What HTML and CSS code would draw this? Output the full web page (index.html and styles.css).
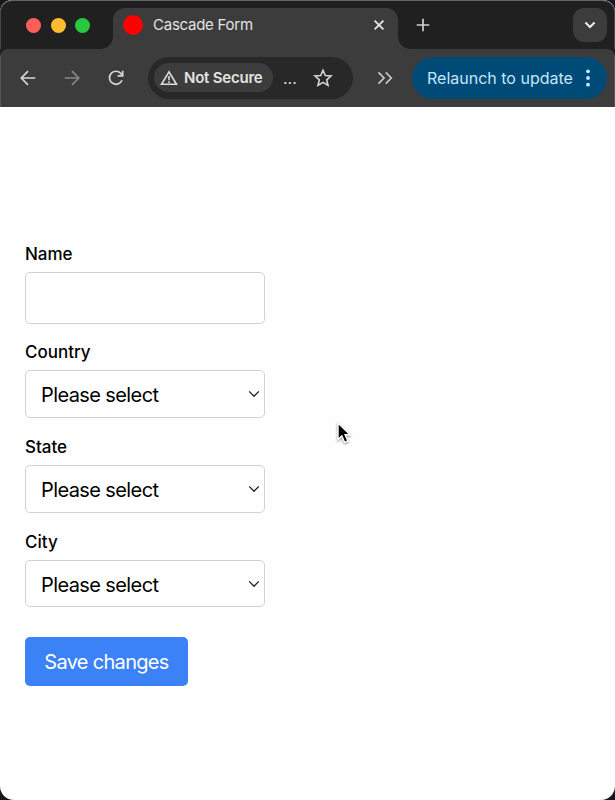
FILE: index.html
```html
<!DOCTYPE html>
<html lang="en">
<head>
<meta charset="utf-8">
<title>Cascade Form</title>
<link rel="stylesheet" href="styles.css">
</head>
<body>
<div class="window">
  <header class="tabstrip">
    <div class="lights"><span class="light close"></span><span class="light minimize"></span><span class="light zoom"></span></div>
    <div class="tab">
      <span class="favicon"></span>
      <span class="tab-title">Cascade Form</span>
      <svg class="tab-close" viewBox="0 0 12 12"><path d="M1.6 1.6l8.8 8.8M10.4 1.6l-8.8 8.8"/></svg>
    </div>
    <svg class="new-tab" viewBox="0 0 14 14"><path d="M7 .7v12.6M.7 7h12.6"/></svg>
    <div class="tab-search"><svg viewBox="0 0 12 8"><path d="M1.4 1.5L6 6l4.6-4.5"/></svg></div>
  </header>
  <nav class="toolbar">
    <svg class="nav-icon" viewBox="0 0 16 16"><path d="M15.3 8H1.6M8 1.2L1.3 8 8 14.8"/></svg>
    <svg class="nav-icon forward" viewBox="0 0 16 16"><path d="M.7 8h13.7M8 1.2L14.7 8 8 14.8"/></svg>
    <svg class="nav-icon" viewBox="0 0 16 16"><path d="M14 10.2A6.5 6.5 0 1 1 12.8 3.4L14.6 5.3M14.7.8v5.1H9.6"/></svg>
    <div class="address">
      <div class="security">
        <svg viewBox="0 0 18 16"><path d="M9 1.8L1.5 14.3h15zM9 6v4.2M9 11.3v1.6"/></svg>
        <span>Not Secure</span>
      </div>
      <span class="url">...</span>
      <svg class="star" viewBox="0 0 20 20"><path d="M10 2.3l2.3 5.2 5.7.5-4.3 3.8 1.3 5.6-5-3-5 3 1.3-5.6L2 8l5.7-.5z"/></svg>
    </div>
    <svg class="more" viewBox="0 0 16 14"><path d="M1.5 1.4L7 7l-5.5 5.6M8.8 1.4L14.3 7l-5.5 5.6"/></svg>
    <div class="relaunch"><span>Relaunch to update</span><svg viewBox="0 0 4 18"><circle cx="2" cy="2.3" r="1.9"/><circle cx="2" cy="9" r="1.9"/><circle cx="2" cy="15.7" r="1.9"/></svg></div>
  </nav>
  <main class="page">
    <form class="form">
      <label for="name">Name</label>
      <input class="control name" id="name" type="text">
      <label for="country">Country</label>
      <div class="select"><select class="control" id="country"><option>Please select</option></select><svg viewBox="0 0 12 8"><path d="M1.2 1.4L6 6.3l4.8-4.9"/></svg></div>
      <label for="state">State</label>
      <div class="select"><select class="control" id="state"><option>Please select</option></select><svg viewBox="0 0 12 8"><path d="M1.2 1.4L6 6.3l4.8-4.9"/></svg></div>
      <label for="city">City</label>
      <div class="select"><select class="control" id="city"><option>Please select</option></select><svg viewBox="0 0 12 8"><path d="M1.2 1.4L6 6.3l4.8-4.9"/></svg></div>
      <button class="save" type="button">Save changes</button>
    </form>
  </main>
  <svg class="pointer" viewBox="0 0 18 24"><path d="M3 2v16.5l3.8-3.6 2.8 6.4 3.3-1.4-2.8-6.2h5z"/></svg>
</div>
</body>
</html>
```
FILE: styles.css
```css
* { box-sizing: border-box; }
body { margin: 0; background: #15171e; font-family: Inter, "Liberation Sans", sans-serif; }
svg { display: block; fill: none; flex: none; }
.window { position: relative; width: 615px; height: 800px; border-radius: 12px 12px 14px 14px; overflow: hidden; background: #fefefe; }
.tabstrip { height: 49px; background: #202020; border-top: 1px solid #656565; box-shadow: inset 1px 0 #484848, inset -1px 0 #484848; display: flex; align-items: center; padding: 0 8px 0 26px; border-radius: 12px 12px 0 0; }
.lights { display: flex; gap: 9.5px; width: 87px; }
.light { width: 15px; height: 15px; border-radius: 50%; }
.close { background: #ff5f57; }
.minimize { background: #febc2e; }
.zoom { background: #28c840; }
.tab { position: relative; align-self: flex-end; width: 285px; height: 41px; background: #3c3c3c; border-radius: 12px 12px 0 0; display: flex; align-items: center; padding: 0 13px 7px 10px; }
.tab::before, .tab::after { content: ""; position: absolute; bottom: 0; width: 12px; height: 12px; }
.tab::before { left: -12px; background: radial-gradient(circle at 0 0, transparent 11.5px, #3c3c3c 12px); }
.tab::after { right: -12px; background: radial-gradient(circle at 100% 0, transparent 11.5px, #3c3c3c 12px); }
.favicon { width: 20px; height: 20px; border-radius: 50%; background: #f00; margin-right: 10px; }
.tab-title { flex: 1; font-size: 15px; line-height: 18px; padding-bottom: 1px; letter-spacing: -.25px; color: #e3e3e3; }
.tab-close { width: 12px; height: 12px; stroke: #e6e6e6; stroke-width: 1.8; }
.new-tab { width: 14px; height: 14px; margin-left: 18px; stroke: #d0d0d0; stroke-width: 1.7; }
.tab-search { width: 34px; height: 34px; margin-left: auto; border-radius: 11px; background: #3c3c3c; display: grid; place-items: center; }
.tab-search svg { width: 12px; height: 8px; stroke: #eee; stroke-width: 2; }
.toolbar { height: 58px; background: #3c3c3c; display: flex; align-items: center; padding: 0 8px 1px 20px; box-shadow: inset 1px 0 #555, inset -1px 0 #555; position: relative; }
.toolbar::before, .toolbar::after { content: ""; position: absolute; top: 0; width: 8px; height: 8px; }
.toolbar::before { left: 0; background: radial-gradient(circle at 100% 100%, transparent 7.5px, #202020 8px); }
.toolbar::after { right: 0; background: radial-gradient(circle at 0 100%, transparent 7.5px, #202020 8px); }
.nav-icon { width: 16px; height: 16px; margin-right: 28px; stroke: #d5d5d5; stroke-width: 1.7; }
.forward { stroke: #868686; }
.address { width: 205px; height: 42px; margin-left: -4px; border-radius: 21px; background: #282828; display: flex; align-items: center; padding-left: 6px; }
.security { width: 119px; height: 29px; border-radius: 15px; background: #3c3c3c; display: flex; align-items: center; padding-left: 6px; gap: 6px; color: #e3e3e3; font-size: 15px; font-weight: 600; letter-spacing: -.22px; white-space: nowrap; }
.security svg { width: 18px; height: 16px; stroke: #ddd; stroke-width: 1.6; }
.url { margin-left: 10px; width: 30px; font-size: 16px; color: #ddd; }
.star { width: 20px; height: 20px; stroke: #d5d5d5; stroke-width: 1.6; }
.more { width: 16px; height: 14px; margin-left: 24px; stroke: #c8c8c8; stroke-width: 1.7; }
.relaunch { width: 195px; height: 42px; margin-left: auto; border-radius: 21px; background: #004a77; color: #c2e7ff; display: flex; align-items: center; justify-content: space-between; padding: 0 17px 0 15px; font-size: 16px; white-space: nowrap; }
.relaunch svg { width: 4px; height: 18px; fill: #c2e7ff; }
.page { padding: 135px 25px 0; }
.form { width: 239.5px; display: flex; flex-direction: column; }
label { height: 24px; line-height: 24px; margin-bottom: 6px; font-size: 17px; font-weight: 500; color: #000; }
.control { display: block; width: 100%; height: 47.7px; margin: 0; border: 1px solid #d2d2d2; border-radius: 5px; background: #fff; font: 20px Inter, sans-serif; letter-spacing: -.6px; color: #000; padding: 2px 15px 0; appearance: none; }
.name { height: 52px; margin-bottom: 16.4px; }
.select { position: relative; margin-bottom: 17px; }
.select svg { position: absolute; right: 4.5px; top: 20px; width: 12px; height: 8px; stroke: #222; stroke-width: 1.3; pointer-events: none; }
.save { width: 163px; height: 49px; margin-top: 13px; border: 0; border-radius: 5px; padding: 1px 0 0; background: #3b82f6; color: #fff; font: 20px Inter, sans-serif; letter-spacing: -.7px; }
.pointer { position: absolute; left: 335px; top: 421px; width: 18px; height: 24px; fill: #000; stroke: #fff; stroke-width: 1.4; filter: drop-shadow(0 1px 1px #0007); }
```
